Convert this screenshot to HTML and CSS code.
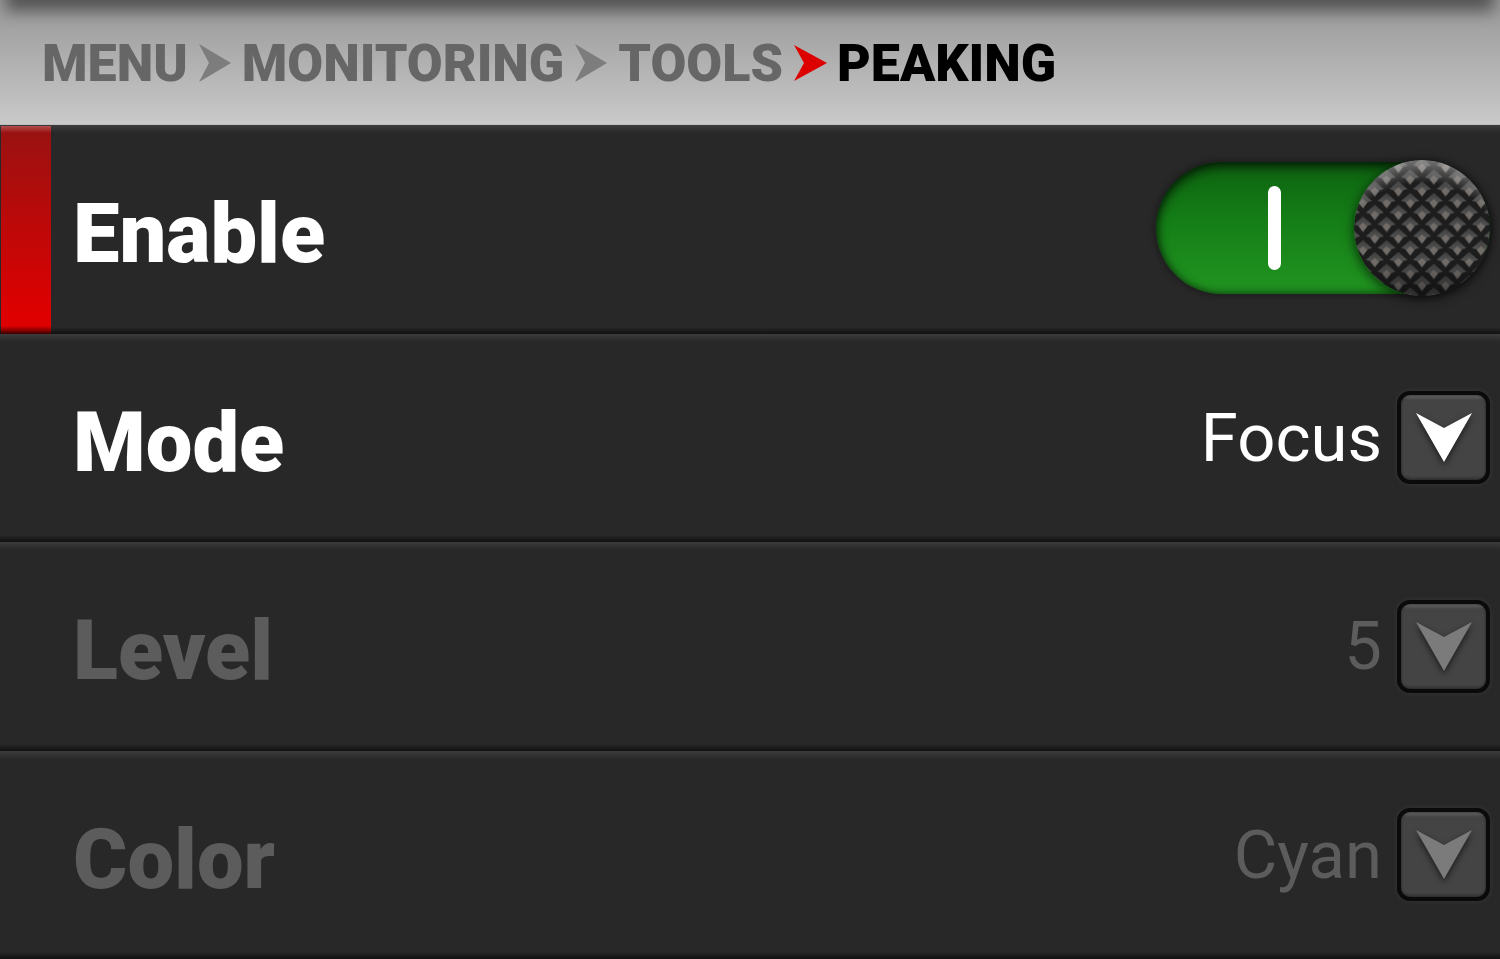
FILE: index.html
```html
<!DOCTYPE html>
<html lang="en">
<head>
<meta charset="utf-8">
<title>Peaking</title>
<link rel="stylesheet" href="styles.css">
</head>
<body>
<div class="screen">
  <header class="topbar">
    <nav aria-label="Breadcrumb">
      <ol class="crumbs">
        <li class="crumb"><a class="crumb-link" href="#menu">MENU</a></li>
        <li class="crumb"><svg class="crumb-arrow" viewBox="0 0 32 38" aria-hidden="true"><path d="M0 0L32 19L0 38L10 19Z"/></svg><a class="crumb-link" href="#monitoring">MONITORING</a></li>
        <li class="crumb"><svg class="crumb-arrow" viewBox="0 0 32 38" aria-hidden="true"><path d="M0 0L32 19L0 38L10 19Z"/></svg><a class="crumb-link" href="#tools">TOOLS</a></li>
        <li class="crumb"><svg class="crumb-arrow crumb-arrow-active" viewBox="0 0 32 38" aria-hidden="true"><path d="M0 1L33 19L0 37L10 19Z"/></svg><a class="crumb-link crumb-current" href="#peaking" aria-current="page">PEAKING</a></li>
      </ol>
    </nav>
  </header>
  <main class="rows">
    <div class="row row-selected">
      <label class="row-label" for="enable">Enable</label>
      <span class="toggle">
        <input class="toggle-input" type="checkbox" role="switch" id="enable" checked>
        <span class="toggle-bar"></span>
        <svg class="knob" viewBox="0 0 136 136" aria-hidden="true">
          <defs>
            <linearGradient id="facet" x1="0" y1="0" x2="0" y2="1">
              <stop offset="0" stop-color="#3c3c3c"/>
              <stop offset=".6" stop-color="#555453"/>
              <stop offset="1" stop-color="#4a4948"/>
            </linearGradient>
            <g id="stud">
              <path d="M0 -11L9 -3L5 -2L0 5L-5 -2L-9 -3Z" fill="url(#facet)"/>
              <path d="M0 -5L4 -1L0 4L-4 -1Z" fill="#716c68"/>
            </g>
            <pattern id="studs" width="23.6" height="23.6" x="56.2" y="67.5" patternUnits="userSpaceOnUse">
              <rect width="23.6" height="23.6" fill="#1d1d1d"/>
              <use href="#stud" x="0" y="0"/><use href="#stud" x="23.6" y="0"/>
              <use href="#stud" x="0" y="23.6"/><use href="#stud" x="23.6" y="23.6"/>
              <use href="#stud" x="11.8" y="11.8"/>
            </pattern>
            <radialGradient id="shine" cx=".5" cy=".8" r=".81">
              <stop offset=".78" stop-color="#fff" stop-opacity="0"/>
              <stop offset="1" stop-color="#fff" stop-opacity=".4"/>
            </radialGradient>
            <linearGradient id="shade" x1="0" y1="0" x2="0" y2="1">
              <stop offset=".75" stop-color="#000" stop-opacity="0"/>
              <stop offset="1" stop-color="#000" stop-opacity=".4"/>
            </linearGradient>
          </defs>
          <circle cx="68" cy="68" r="68" fill="url(#studs)"/>
          <circle cx="68" cy="68" r="68" fill="url(#shine)"/>
          <circle cx="68" cy="68" r="68" fill="url(#shade)"/>
        </svg>
      </span>
    </div>
    <div class="row">
      <label class="row-label" for="mode">Mode</label>
      <span class="picker">
        <select class="picker-select" id="mode"><option>Focus</option></select>
        <span class="picker-button"><svg class="picker-arrow" viewBox="0 0 56 49" aria-hidden="true"><path d="M0 0L28 15L56 0L28 49Z"/></svg></span>
      </span>
    </div>
    <div class="row row-disabled">
      <label class="row-label" for="level">Level</label>
      <span class="picker">
        <select class="picker-select" id="level" disabled><option>5</option></select>
        <span class="picker-button"><svg class="picker-arrow" viewBox="0 0 56 49" aria-hidden="true"><path d="M0 0L28 15L56 0L28 49Z"/></svg></span>
      </span>
    </div>
    <div class="row row-disabled">
      <label class="row-label" for="color">Color</label>
      <span class="picker">
        <select class="picker-select" id="color" disabled><option>Cyan</option></select>
        <span class="picker-button"><svg class="picker-arrow" viewBox="0 0 56 49" aria-hidden="true"><path d="M0 0L28 15L56 0L28 49Z"/></svg></span>
      </span>
    </div>
  </main>
</div>
</body>
</html>
```
FILE: styles.css
```css
* { box-sizing: border-box; }
body {
  margin: 0;
  background: #282828;
  font-family: Roboto, "Liberation Sans", sans-serif;
}
.screen {
  display: flex;
  flex-direction: column;
  min-height: 100vh;
}
.topbar {
  display: flex;
  align-items: center;
  height: 125px;
  padding: 2px 42px 0;
  overflow: hidden;
  border-bottom: 1px solid #bcbcbc;
  background: linear-gradient(#999, #a3a3a3 28px, #c9c9c9);
  position: relative;
}
.topbar::before {
  content: "";
  position: absolute;
  top: -32px;
  left: 6px;
  right: 6px;
  height: 32px;
  box-shadow: 0 11px 16px #545454;
}
.crumbs {
  display: flex;
  gap: 11px;
  margin: 0;
  padding: 0;
  list-style: none;
}
.crumb {
  display: flex;
  align-items: center;
  gap: 11px;
}
.crumb-link {
  padding-top: 2px;
  color: #666;
  font-size: 52px;
  font-weight: 900;
  line-height: 64px;
  text-decoration: none;
}
.crumb-current { color: #000; }
.crumb-arrow {
  width: 32px;
  height: 38px;
  fill: #7d7d7d;
  overflow: visible;
}
.crumb-arrow-active { fill: #dc0000; }
.rows {
  flex: 1;
  display: grid;
  grid-auto-rows: minmax(160px, 1fr);
}
.row {
  display: flex;
  align-items: center;
  justify-content: space-between;
  padding: 0 10px 0 73px;
  background:
    linear-gradient(#3c3c3c, #28282800) top / 100% 8px no-repeat,
    linear-gradient(#28282800, #111) bottom / 100% 7px no-repeat,
    #282828;
}
.row-selected {
  background:
    linear-gradient(#ffffff40, #ffffff00) 1px 1px / 50px 7px no-repeat,
    linear-gradient(#0000, #000b) 1px 100% / 50px 8px no-repeat,
    linear-gradient(#981212, #de0000 90%) 1px 1px / 50px 100% no-repeat,
    linear-gradient(#3c3c3c, #28282800) top / 100% 8px no-repeat,
    linear-gradient(#28282800, #111) bottom / 100% 7px no-repeat,
    #282828;
}
.row-label {
  padding-top: 10px;
  color: #fff;
  font-size: 83px;
  font-weight: 900;
  line-height: 100px;
}
.row-disabled .row-label { color: #5c5c5c; }
.toggle {
  display: grid;
  align-items: center;
  width: 334px;
  margin-bottom: 2px;
}
.toggle > * { grid-area: 1 / 1; }
.toggle-input {
  appearance: none;
  width: 100%;
  height: 132px;
  margin: 0;
  border-radius: 66px;
  background: linear-gradient(#0e6210, #147c16 40%, #1f911f 90%);
  box-shadow:
    inset 0 5px 12px #0009,
    inset 0 0 8px #0008,
    0 0 0 2px #222,
    0 0 5px 2px #1118;
}
.toggle-bar {
  width: 13px;
  height: 84px;
  margin-left: 112px;
  border-radius: 7px;
  background: #fff;
  pointer-events: none;
}
.knob {
  justify-self: end;
  width: 136px;
  height: 136px;
  border-radius: 50%;
  box-shadow: 0 3px 12px #000a;
  pointer-events: none;
}
.picker {
  display: grid;
  align-items: center;
  justify-items: end;
}
.picker > * { grid-area: 1 / 1; }
.picker-select {
  appearance: none;
  margin: 0;
  padding: 0 108px 0 0;
  border: 0;
  background: transparent;
  color: #fff;
  font: 400 67px/92px Roboto, "Liberation Sans", sans-serif;
  text-align: right;
  text-align-last: right;
  opacity: 1;
}
.row-disabled .picker-select { color: #5c5c5c; }
.picker-button {
  display: grid;
  place-items: center;
  width: 93px;
  height: 93px;
  border: 4px solid #0a0a0a;
  border-radius: 13px;
  background: linear-gradient(#6a6a6a, #444 5px, #444 80px, #383838);
  box-shadow: inset 0 0 2px 1px #2228, 0 0 4px 1px #333;
  pointer-events: none;
}
.picker-arrow {
  width: 56px;
  height: 49px;
  fill: #fff;
  filter: drop-shadow(0 3px 3px #0009);
}
.row-disabled .picker-arrow { fill: #7b7b7b; }
```
